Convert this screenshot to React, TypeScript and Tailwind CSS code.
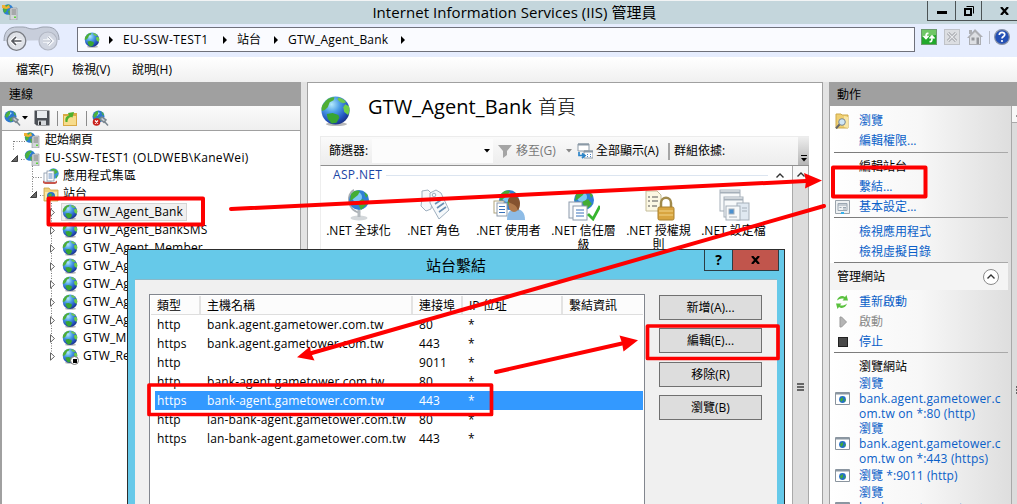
import React from "react";

type P = { className?: string };

function Globe({ className = "w-4 h-4" }: P) {
  return (
    <svg viewBox="0 0 32 32" className={"shrink-0 " + className}>
      <defs>
        <radialGradient id="sea" cx="36%" cy="28%" r="75%">
          <stop offset="0" stopColor="#b4eafc" />
          <stop offset="0.4" stopColor="#4a9ce6" />
          <stop offset="0.8" stopColor="#2250bb" />
          <stop offset="1" stopColor="#1b3487" />
        </radialGradient>
      </defs>
      <ellipse cx="17" cy="29.5" rx="11" ry="2" fill="#b9b9b9" />
      <circle cx="16" cy="15.5" r="14.5" fill="url(#sea)" />
      <path d="M4 8C7 3 12 1 15 2l-1 3-4 2-2 5-3 3-3 1C1 13 2 10 4 8z" fill="#4fae35" />
      <path d="M19 2c4 1 6 2 8 5l-3 1-3-1-3-3z" fill="#6cc850" />
      <path d="M26 9l4 2c1 4 0 7-1 9l-4-3-1-5z" fill="#6fce48" />
      <path d="M7 19l6-1 6 2 1 3-3 5-5 1-4-5z" fill="#38a532" />
    </svg>
  );
}

function Server({ home = false }: { home?: boolean }) {
  return (
    <svg viewBox="0 0 16 16" className="w-4 h-4 shrink-0">
      <circle cx="6" cy="5.5" r="5.2" fill="#2d7fd3" />
      <path d="M3 3c1-1 3-1 4 0L5 5z" fill="#a5e0fa" />
      <path d="M1 5c1-3 4-5 7-4L6 4 4 8 2 9zM6 7l3-1 1 4-3 1z" fill="#4bb13c" />
      {home && <path d="M0 1h3l1 2 3-2 1 3-4 1-4-1z" fill="#f2b134" />}
      <path d="M9 4h6v12H8V5z" fill="#d3d6d9" stroke="#8b8f94" strokeWidth=".6" />
      <path d="M9.500 6h4.500M9.500 8h4.500M9.500 10h4.500" stroke="#666" strokeWidth=".8" />
      <rect x="12" y="12.500" width="2" height="1.500" fill="#5fd23c" />
    </svg>
  );
}

function Pools() {
  return (
    <svg viewBox="0 0 16 16" className="w-4 h-4 shrink-0">
      <circle cx="10.500" cy="5.500" r="5.200" fill="#3b93da" />
      <path d="M8 1l4 0 3 3-3 2-3-1zM13 8l2-1-2 4z" fill="#4db53c" />
      <rect x="1" y="5" width="7" height="9" fill="#fff" stroke="#8595a8" strokeWidth=".8" />
      <rect x="4" y="3" width="7" height="10" fill="#fff" stroke="#8595a8" strokeWidth=".8" />
      <path d="M5.500 6h4M5.500 8h4M5.500 10h4" stroke="#4a78b5" strokeWidth=".9" />
      <path d="M0 12.500l2 1.500h10l2-1.500v2.500l-2 1H2l-2-1z" fill="#c8564d" />
    </svg>
  );
}

function SiteFolder() {
  return (
    <svg viewBox="0 0 16 16" className="w-4 h-4 shrink-0">
      <path d="M1 2h5l1.500 2H15v11H1z" fill="#f0d27a" stroke="#c9a345" strokeWidth=".8" />
      <path d="M2 6h12v8H2z" fill="#fae9a8" />
      <circle cx="8" cy="10" r="4" fill="#2672c9" />
      <path d="M5 9l3-2 1 2-2 3zM9 11l2-2v3z" fill="#4db53c" />
    </svg>
  );
}

function Plug({ off = false }: { off?: boolean }) {
  return (
    <svg viewBox="0 0 17 16" className="w-[17px] h-4 shrink-0">
      <circle cx="6.500" cy="6.500" r="6" fill="#2d78cf" />
      <path d="M3 4c1-2 3-2 5-1L5 6z" fill="#a5e0fa" />
      <path d="M1 6c1-3 3-5 5-5L6 4 3 8zM5 9l3-2 2 2-3 3zM9 1l3 3-1 2z" fill="#4bb13c" />
      <path d="M8 9l2-2 4 3-2 2.500zM12 11l4 4.500" stroke="#7b8790" strokeWidth="1.500" fill="#c5ced6" />
      {off && (
        <g>
          <circle cx="4.500" cy="12" r="3.800" fill="#c9211b" />
          <path d="M3 10.500l3 3M6 10.500l-3 3" stroke="#fff" strokeWidth="1.200" />
        </g>
      )}
    </svg>
  );
}

function Caret({ className = "" }: P) {
  return (
    <svg viewBox="0 0 6 4" className={"w-[6px] h-[4px] shrink-0 " + className}>
      <path d="M0 0h6L3 3.500z" fill="currentColor" />
    </svg>
  );
}

function Crumb() {
  return (
    <svg viewBox="0 0 4 8" className="w-1 h-2 shrink-0">
      <path d="M0 0l4 4-4 4z" fill="#000" />
    </svg>
  );
}

function TitleBar() {
  return (
    <header className="flex h-6 border-t border-[#f2f4f5] bg-[#c4d6dc] shrink-0">
      <div className="w-[68px] pl-[2px] pt-[3px]"><Server home /></div>
      <h1 className="grow text-center text-[15px] leading-[23px] tracking-[0.05px] pl-[34px]">
        Internet Information Services (IIS) 管理員
      </h1>
      <div className="flex w-[90px] h-5 border-l border-b border-[#4c5355] shrink-0">
        <div className="w-7 border-r border-[#4c5355] flex items-end justify-center pb-[6px]">
          <div className="w-[10px] h-[3px] bg-black" />
        </div>
        <div className="w-[26px] border-r border-[#4c5355] flex items-center justify-center">
          <svg viewBox="0 0 10 10" className="w-[10px] h-[10px]">
            <path d="M2.500 .5h7v7" fill="none" stroke="#000" />
            <path d="M1 3h6v6H1z" fill="none" stroke="#000" strokeWidth="2" />
          </svg>
        </div>
        <div className="grow flex items-center pl-[18px]">
          <svg viewBox="0 0 9 8" className="w-[9px] h-2"><path d="M1 0l7 8M8 0L1 8" stroke="#000" strokeWidth="2.200" /></svg>
        </div>
      </div>
    </header>
  );
}

function NavBar() {
  return (
    <div className="flex h-[33px] bg-[#e6edfe] shrink-0">
      <svg viewBox="0 0 60 30" className="w-[60px] h-[30px] ml-[2px] mr-[15px] shrink-0">
        <path d="M2 17C2 6 8 3 15 3h6c4 0 5 2 10 2s7-2 10-2h4c8 0 12 5 12 13" fill="#c8cedb" />
        <path d="M2 17C2 6 8 3 15 3h6c4 0 5 2 10 2s7-2 10-2h4c8 0 12 5 12 13" fill="none" stroke="#9ba2af" />
        <circle cx="14.500" cy="17" r="9.300" fill="#dfe2e8" stroke="#7a7d84" strokeWidth="1.300" />
        <path d="M19.500 17H10.500M14 13L10 17l4 4" fill="none" stroke="#fff" strokeWidth="3.600" />
        <path d="M19.500 17H10.500M14 13L10 17l4 4" fill="none" stroke="#55585e" strokeWidth="1.700" />
        <circle cx="46" cy="17" r="9" fill="#d0d5e0" stroke="#b2b7c3" strokeWidth="1.200" />
        <path d="M41 17h9M46 13l4 4-4 4" fill="none" stroke="#f4f6fa" strokeWidth="3.500" />
        <path d="M41 17h9M46 13l4 4-4 4" fill="none" stroke="#b0b6c2" strokeWidth="1" />
      </svg>
      <div className="flex items-center mt-[3px] w-[838px] h-[25px] border border-[#6f717b] bg-[#fafbff] pl-[6px] text-[12px] shrink-0">
        <Globe className="w-4 h-4 mr-[9px]" />
        <Crumb />
        <span className="w-[100px] pl-[10px] tracking-[0.4px] shrink-0">EU-SSW-TEST1</span>
        <span className="w-[14px] flex justify-end mr-[10px] shrink-0"><Crumb /></span>
        <span className="w-[37px] shrink-0">站台</span>
        <Crumb />
        <span className="w-[123px] pl-[10px] whitespace-nowrap tracking-[0.2px] shrink-0">GTW_Agent_Bank</span>
        <Crumb />
      </div>
      <div className="flex pl-[6px] pt-[5px]">
        <svg viewBox="0 0 16 16" className="w-4 h-4 mr-[7px]">
          <rect x=".5" y=".5" width="15" height="15" fill="#22a92b" stroke="#6c9a6e" />
          <path d="M1 1h14v5L1 8z" fill="#6fc766" />
          <path d="M7.500 4.500C5.500 4 5 5 5 8M2.500 7L5 9.500 7.500 7M8.500 12.500C10.500 13 11 12 11 9M8.500 9.500L11 7l2.500 2.500" fill="none" stroke="#fff" strokeWidth="1.700" />
        </svg>
        <svg viewBox="0 0 16 16" className="w-4 h-4 mr-[7px]">
          <rect x=".5" y=".5" width="15" height="15" fill="#dcdee2" stroke="#bfc2c8" />
          <path d="M4 4l8 8M12 4l-8 8" stroke="#9a9da3" strokeWidth="3" />
          <path d="M4 4l8 8M12 4l-8 8" stroke="#e8e9ec" strokeWidth="1.300" />
        </svg>
        <svg viewBox="0 0 16 16" className="w-4 h-4 mr-[6px]">
          <path d="M2 1h3v4H2zM8 0l8 8h-2v8H2V9H0z" fill="#adafb4" />
          <path d="M8 3l5 5v7H3V8z" fill="#dddfe3" />
          <path d="M4.500 8.500h3v3h-3zM9.500 8.500h2.500V15H9.500z" fill="#95979c" />
        </svg>
        <div className="w-px h-[13px] mt-[2px] bg-[#b9bdc8] mr-[4px]" />
        <svg viewBox="0 0 16 16" className="w-4 h-4">
          <circle cx="8" cy="8" r="7.400" fill="#2450b5" stroke="#8a93a8" strokeWidth="1.200" />
          <path d="M5.300 6c0-3.600 5.600-3.400 5.400-.2C10.600 7.600 8 7.500 8 9.600" fill="none" stroke="#fff" strokeWidth="1.700" />
          <circle cx="8" cy="12" r="1.100" fill="#fff" />
        </svg>
      </div>
    </div>
  );
}

const sites = [
  "GTW_Agent_Bank", "GTW_Agent_BankSMS", "GTW_Agent_Member", "GTW_Ag", "GTW_Ag",
  "GTW_Ag", "GTW_Ag", "GTW_M", "GTW_Re",
];

function Expanded() {
  return <svg viewBox="0 0 7 7" className="w-[7px] h-[7px] shrink-0"><path d="M6.500 .5v6h-6z" fill="#666" stroke="#222" strokeWidth=".8" /></svg>;
}

function Connections() {
  return (
    <section className="w-[301px] flex flex-col border-l-2 border-r border-[#a0a0a0] bg-white shrink-0">
      <h2 className="h-6 bg-[#a0a0a0] text-[12px] leading-[25px] pl-[7px] shrink-0">連線</h2>
      <div className="h-[25px] flex items-center border-b border-[#a0a0a0] bg-gradient-to-b from-[#fbfbfb] to-[#efefef] pl-[2px] shrink-0">
        <Plug />
        <Caret className="ml-[1px] mr-[6px]" />
        <svg viewBox="0 0 16 16" className="w-4 h-4 mr-[7px]">
          <path d="M.5 .5h15v15h-13l-2-2z" fill="#4b4f55" />
          <path d="M3 1h10v7H3z" fill="#e9ecef" />
          <path d="M4 10.500h8V15H4z" fill="#d5d8db" />
          <path d="M5 11.500h2V15H5z" fill="#333" />
        </svg>
        <div className="w-px h-[15px] bg-[#8b8b8b] mr-[5px]" />
        <svg viewBox="0 0 15 15" className="w-[15px] h-[15px] mr-[8px]">
          <path d="M0 3h7l1-1h6v13H0z" fill="#d9a944" />
          <path d="M1 5h12v9H1z" fill="#f7dc8c" />
          <path d="M2.500 11C2 7 3 5 6 4.500L5 2l6-1-1.500 5.500L8 6C5 7 4.500 8.500 4.500 11z" fill="#4fb12e" />
        </svg>
        <div className="w-px h-[15px] bg-[#8b8b8b] mr-[5px]" />
        <Plug off />
      </div>
      <div className="relative grow text-[12px] whitespace-nowrap overflow-hidden">
        <svg className="absolute left-0 top-0 w-16 h-[240px]" viewBox="0 0 64 240">
          <path d="M11.500 10v9M12 10.500h11M19 28.500h4M30.500 35v26M31 46.500h10M38 64.500h4M49.500 72v156" stroke="#777" strokeDasharray="1 1.500" fill="none" />
        </svg>
        <div className="relative h-[18px] flex items-center pl-[22px] gap-[5px]"><Server home />起始網頁</div>
        <div className="relative h-[18px] flex items-center pl-[9px]">
          <Expanded /><div className="w-[6px]" /><Server />
          <span className="ml-[5px] tracking-[0.33px]">EU-SSW-TEST1 (OLDWEB\KaneWei)</span>
        </div>
        <div className="relative h-[18px] flex items-center pl-[41px] gap-[4px] tracking-[0.2px]"><Pools />應用程式集區</div>
        <div className="relative h-[18px] flex items-center pl-[28px]">
          <Expanded /><div className="w-[6px]" /><SiteFolder /><span className="ml-[4px]">站台</span>
        </div>
        {sites.map((s, i) => (
          <div key={i} className="relative h-[18px] flex items-center pl-[48px]">
            <svg viewBox="0 0 5 9" className="w-[5px] h-[9px] shrink-0 mr-[6px]"><path d="M.5 .8L4.500 4.500.5 8.200z" fill="#fff" stroke="#555" strokeWidth=".9" /></svg>
            <div className={i === 0 ? "h-[18px] w-[126px] flex items-center border border-[#d5d5d5] bg-[#f0f0f0]" : "h-[18px] flex items-center border border-transparent"}>
              <span className="relative w-[16px] h-[16px] flex">
                <Globe className="w-4 h-4" />
                {i === 8 && (
                  <span className="absolute -right-px -bottom-px w-[9px] h-[9px] rounded-full bg-white border border-[#777] flex items-center justify-center">
                    <span className="w-[4px] h-[4px] bg-black" />
                  </span>
                )}
              </span>
              <span className="ml-[5px] tracking-[0.18px]">{s}</span>
            </div>
          </div>
        ))}
      </div>
    </section>
  );
}

function FeatureIcon({ kind }: { kind: number }) {
  const land = (
    <g>
      <circle cx="16" cy="11" r="10" fill="#2f7fd6" />
      <circle cx="14" cy="8" r="5" fill="#7cc8f3" />
      <path d="M8 5c3-4 7-4 9-3l-2 4-5 4-3 2zM14 13l6-3 4 5-6 6zM21 3l4 3-2 3z" fill="#43ad35" />
    </g>
  );
  return (
    <svg viewBox="0 0 32 32" className="w-8 h-8">
      {kind === 0 && (
        <g>
          <path d="M11 1C3 5 4 21 17 24" fill="none" stroke="#a9aeb3" strokeWidth="2" />
          <ellipse cx="16" cy="29" rx="8.500" ry="2.500" fill="#d3d7da" />
          <path d="M14.500 21h3v7h-3z" fill="#b4babf" />
          {land}
        </g>
      )}
      {kind === 1 && (
        <g stroke="#9fb0c0" fill="#f6f9fb" strokeWidth="1">
          <path d="M4 2l6-1 5 5-2 14-5 2-5-5 1-8z" />
          <path d="M12 4l6-3 5 3 8 17-10 9-9-16z" />
          <circle cx="16" cy="6" r="1.800" />
          <path d="M17 15l6-4M19 19l7-5M21 23l7-5" stroke="#6b90b4" strokeWidth="1.600" />
        </g>
      )}
      {kind === 2 && (
        <g>
          {land}
          <rect x="1" y="12" width="10" height="12" fill="#fff" stroke="#b0a37c" />
          <rect x="4" y="14" width="10" height="13" fill="#fff" stroke="#8c9aab" />
          <path d="M6 17.500h6M6 20.500h6M6 23.500h6" stroke="#3b72ba" />
          <path d="M14 31c0-8 3-11 9-11s9 4 9 11z" fill="#8ebce6" />
          <ellipse cx="21" cy="16" rx="5.500" ry="7" fill="#b07a4c" />
          <path d="M15 13c-1-8 12-8 12 1 0 3-1 6-2 8-1-6-5-7-10-9z" fill="#85532f" />
        </g>
      )}
      {kind === 3 && (
        <g>
          {land}
          <rect x="1" y="13" width="13" height="16" fill="#f7f9fb" stroke="#8c9aab" />
          <rect x="5" y="17" width="14" height="14" fill="#fff" stroke="#8c9aab" />
          <path d="M8 21h8M8 24h8M8 27h8" stroke="#3b72ba" />
          <path d="M20 25l5 5 7-13" fill="none" stroke="#37b52f" strokeWidth="2.800" />
        </g>
      )}
      {kind === 4 && (
        <g>
          <path d="M3 2h11l4 4v16H3z" fill="#fbf7e3" stroke="#c5bd9a" />
          <path d="M5 8h2M5 12h2M5 17h2M9 8h6M9 12h6M9 17h5" stroke="#555" strokeWidth="1.200" />
          <path d="M18 19v-5c0-7 10-7 10 0v5" fill="none" stroke="#a08a4c" strokeWidth="2.500" />
          <rect x="15" y="18" width="16" height="13" rx="1.500" fill="#d8a540" stroke="#a9802f" />
          <path d="M16 22h14M16 26h14" stroke="#f3d588" />
        </g>
      )}
      {kind === 5 && (
        <g fill="#f7f9fa" stroke="#a5afb9">
          <rect x="2" y="1" width="20" height="21" />
          <path d="M2 3.500h20" strokeWidth="2" />
          <rect x="6" y="8" width="19" height="20" />
          <path d="M6 10.500h19" strokeWidth="2" />
          <rect x="19" y="14" width="12" height="17" fill="#dfe8f1" />
          <rect x="8" y="17" width="14" height="14" />
          <rect x="11" y="20" width="5" height="5" fill="#4a90d0" />
          <path d="M11 28h8M24 19h5M24 22h5" />
        </g>
      )}
    </svg>
  );
}

const features = [".NET 全球化", ".NET 角色", ".NET 使用者", ".NET 信任層級", ".NET 授權規則", ".NET 設定檔"];

function ChevronUp() {
  return <svg viewBox="0 0 8 5" className="w-2 h-[5px] shrink-0"><path d="M.5 4.500L4 1l3.500 3.500" fill="none" stroke="#333" strokeWidth="1.400" /></svg>;
}

function Home() {
  return (
    <main className="w-[516px] flex flex-col border-l border-r border-t border-[#a0a0a0] bg-white ml-[6px] pl-[12px] shrink-0">
      <div className="h-[53px] flex items-center shrink-0">
        <Globe className="w-[31px] h-[32px] mt-[2px]" />
        <h2 className="ml-[17px] text-[20px] whitespace-nowrap tracking-[0.1px] mt-[-6px]">GTW_Agent_Bank<span className="ml-[6px] text-[19px] font-light">首頁</span></h2>
      </div>
      <div className="w-[489px] h-[30px] flex items-center border-t border-l border-[#ececec] border-b border-b-[#909090] bg-gradient-to-b from-[#fafafa] to-[#ededed] text-[12px] pl-[8px] shrink-0">
        <span className="w-[43px] whitespace-nowrap">篩選器:</span>
        <div className="w-[121px] h-6 bg-[#fcfcfc] flex items-center justify-end pr-[3px]"><Caret /></div>
        <svg viewBox="0 0 14 14" className="w-[14px] h-[14px] ml-[5px] mr-[4px]"><path d="M0 1h14L9 7v4l-4 3V7z" fill="#a5a5a5" /></svg>
        <span className="w-[50px] text-[#777] whitespace-nowrap">移至(G)</span>
        <Caret className="text-[#888] mr-[5px]" />
        <svg viewBox="0 0 16 16" className="w-4 h-4 mr-[3px] shrink-0">
          <path d="M1 1h11v7H1zM7 8h9v7H7z" fill="#fff" stroke="#8b99a6" />
          <path d="M1 1.500h11M7 8.500h9" stroke="#8b99a6" strokeWidth="2" />
          <path d="M2 9v3.500h5M5 10.500L8 12.500l-3 2.500" stroke="#2d85c9" strokeWidth="1.700" fill="none" />
          <path d="M10 11.500h1M13 11.500h1M10 13.500h1M13 13.500h1" stroke="#4d7fc0" />
        </svg>
        <span className="w-[72px] whitespace-nowrap shrink-0">全部顯示(A)</span>
        <div className="w-[2px] h-[17px] bg-[#a5a5a5] mr-[4px]" />
        <span className="whitespace-nowrap">群組依據:</span>
        <div className="ml-auto w-[11px] h-full bg-gradient-to-b from-[#eeeeee] to-[#b5b5b5] flex flex-col items-center justify-end pb-[3px] gap-[2px]">
          <div className="w-[6px] h-px bg-black" /><Caret />
        </div>
      </div>
      <div className="w-[489px] flex grow border-l border-[#eeeeee]">
        <div className="w-[471px] shrink-0">
          <div className="h-[18px] flex items-center pl-[12px] text-[12px] text-[#1a45a5] shrink-0">
            <span className="w-[53px] tracking-[0.35px]">ASP.NET</span>
            <div className="w-[382px] h-px bg-[#dce5f0]" />
            <div className="ml-[8px]"><ChevronUp /></div>
          </div>
          <div className="flex pt-[5px]">
            {features.map((f, i) => (
              <div key={f} className="w-[75px] flex flex-col items-center text-center text-[12px] leading-[14px]">
                <FeatureIcon kind={i} />
                <span className="mt-[3px] w-[72px]">{f}</span>
              </div>
            ))}
          </div>
        </div>
        <div className="w-[17px] border-l border-r border-[#a9a9a9] bg-[#dcdcdc] flex flex-col items-center shrink-0">
          <div className="h-[17px] w-full flex items-center justify-center bg-[#f7f7f7]"><ChevronUp /></div>
          <div className="mt-[200px] flex flex-col gap-px">
            <div className="w-[7px] h-[2px] bg-[#666]" /><div className="w-[7px] h-[2px] bg-[#666]" /><div className="w-[7px] h-[2px] bg-[#666]" />
          </div>
        </div>
      </div>
    </main>
  );
}

function Rule() {
  return <div className="h-px ml-[4px] w-[174px] bg-gradient-to-r from-[#777] to-[#aaa] shrink-0" />;
}

function Action({ icon, children, className = "h-5 text-[#0a5fc8]" }: { icon?: React.ReactNode; children: React.ReactNode; className?: string }) {
  return (
    <div className={"flex items-center shrink-0 " + className}>
      <span className="w-[29px] pl-[5px] flex shrink-0">{icon}</span>
      <span className="whitespace-nowrap">{children}</span>
    </div>
  );
}

function BrowserIcon() {
  return (
    <svg viewBox="0 0 15 13" className="w-[15px] h-[13px]">
      <path d="M.5 .5h14v12H.5z" fill="#fff" stroke="#8a949e" />
      <path d="M1 1.500h13" stroke="#8b97a2" strokeWidth="2" />
      <circle cx="7.500" cy="7.500" r="3.400" fill="#236fc6" />
      <path d="M5 7l3-2v3l-2 2zM9 8l2-1-1 3z" fill="#41ab38" />
    </svg>
  );
}

function Actions() {
  return (
    <aside className="flex flex-col ml-[6px] grow min-w-0 overflow-hidden border-l border-[#a0a0a0]">
      <h2 className="h-6 bg-[#a0a0a0] text-[12px] leading-[25px] pl-[7px] shrink-0">動作</h2>
      <div className="flex grow">
        <div className="w-[181px] flex flex-col bg-gradient-to-r from-white via-[#f7f7f7] to-[#dedede] text-[12px] pt-[5px] shrink-0">
          <Action icon={
            <svg viewBox="0 0 14 16" className="w-[14px] h-4">
              <path d="M1 1h5l1 1h6v13H1z" fill="#efcf71" stroke="#cda94b" />
              <path d="M9 3l4 1v11l-4-1z" fill="#f9e6a5" />
              <circle cx="7" cy="9" r="3.300" fill="#cfe6f5" stroke="#788694" />
              <path d="M4.500 11.500L1 15.500" stroke="#666" strokeWidth="2" />
            </svg>}>瀏覽</Action>
          <Action>編輯權限...</Action>
          <div className="h-px" /><Rule /><div className="h-1" />
          <Action className="h-5 text-black">編輯站台</Action>
          <Action>繫結...</Action>
          <Action icon={
            <svg viewBox="0 0 15 15" className="w-[15px] h-[15px]">
              <path d="M.5 .5h14v13H.5z" fill="#eef1f3" stroke="#9aa3ab" />
              <path d="M3 3.500h9v7H3zM3 5h9M4.500 7.500h2M8 7.500h3M8 9h3" fill="none" stroke="#9aa6b2" />
              <path d="M6 12h3v2H6z" fill="#35b2ed" />
            </svg>}>基本設定...</Action>
          <Rule /><div className="h-1" />
          <Action>檢視應用程式</Action>
          <Action>檢視虛擬目錄</Action>
          <Rule />
          <div className="h-[27px] flex items-center pl-[7px] bg-[#f4f4f4] mr-[3px] shrink-0">
            <span className="w-[146px]">管理網站</span>
            <span className="w-4 h-4 rounded-full border border-[#8a8a8a] bg-white flex items-center justify-center"><ChevronUp /></span>
          </div>
          <div className="h-[2px]" />
          <Action icon={
            <svg viewBox="0 0 14 14" className="w-[14px] h-[14px]">
              <path d="M2 5.500c1-4 5-5.500 8-3.500l1.500-2L13 5.500H7.500L9 3.700C6.500 3 4.500 3.500 2 5.500zM12 8.500c-1 4-5 5.500-8 3.500l-1.500 2L1 8.500h5.500L5 10.300c2.500.7 4.500.2 7-1.800z" fill="#5ac13e" />
            </svg>}>重新啟動</Action>
          <Action className="h-5 text-[#8a8a8a]" icon={<svg viewBox="0 0 14 12" className="w-[14px] h-3"><path d="M5 1h1.500l5 5-5 5H5z" fill="#b5b5b5" stroke="#999" /></svg>}>啟動</Action>
          <Action icon={<div className="w-[10px] h-[10px] ml-[3px] bg-[#4a4a4a] border border-[#222]" />}>停止</Action>
          <Rule /><div className="h-1" />
          <Action className="h-[19px] text-black">瀏覽網站</Action>
          <Action icon={<BrowserIcon />} className="h-[45px] leading-[15px] tracking-[0.17px] text-[#0a5fc8]">瀏覽<br />bank.agent.gametower.c<br />om.tw on *:80 (http)</Action>
          <Action icon={<BrowserIcon />} className="h-[45px] leading-[15px] tracking-[0.17px] text-[#0a5fc8]">瀏覽<br />bank.agent.gametower.c<br />om.tw on *:443 (https)</Action>
          <Action icon={<BrowserIcon />} className="h-[19px] tracking-[0.05px] text-[#0a5fc8]">瀏覽 *:9011 (http)</Action>
          <Action icon={<span className="mt-[17px]"><BrowserIcon /></span>} className="h-[30px] leading-[15px] tracking-[0.17px] text-[#0a5fc8]">瀏覽<br />bank-agent.gametower.c</Action>
        </div>
        <div className="grow border-l border-[#a9a9a9] bg-[#dcdcdc] overflow-hidden">
          <div className="h-[17px] w-[17px] bg-[#f8f8f8] border-b border-[#a9a9a9] flex items-center pl-[4px]"><ChevronUp /></div>
          <div className="mt-[263px] ml-[4px] flex flex-col gap-px">
            <div className="w-[7px] h-[2px] bg-[#666]" /><div className="w-[7px] h-[2px] bg-[#666]" /><div className="w-[7px] h-[2px] bg-[#666]" />
          </div>
        </div>
      </div>
    </aside>
  );
}

const rows = [
  ["http", "bank.agent.gametower.com.tw", "80"],
  ["https", "bank.agent.gametower.com.tw", "443"],
  ["http", "", "9011"],
  ["http", "bank-agent.gametower.com.tw", "80"],
  ["https", "bank-agent.gametower.com.tw", "443"],
  ["http", "lan-bank-agent.gametower.com.tw", "80"],
  ["https", "lan-bank-agent.gametower.com.tw", "443"],
];

function Dialog() {
  return (
    <div className="absolute left-[127px] top-[249px] w-[658px] h-[270px] border border-[#2d2d2d] bg-[#66c9e9] px-[7px] flex flex-col">
      <div className="flex h-[29px] shrink-0 mr-[-2px]">
        <h2 className="grow text-center text-[15px] leading-[30px] pl-[73px]">站台繫結</h2>
        <div className="flex h-[21px] w-[75px] border border-t-0 border-[#2c3c44] shrink-0">
          <div className="w-[28px] border-r border-[#2c3c44] text-center text-[14px] leading-[19px] font-bold">?</div>
          <div className="grow bg-[#c1554c] flex items-center justify-center">
            <svg viewBox="0 0 9 8" className="w-[9px] h-2"><path d="M1 0l7 8M8 0L1 8" stroke="#000" strokeWidth="2.200" /></svg>
          </div>
        </div>
      </div>
      <div className="flex grow border-t border-[#8ab8c8] bg-[#f0f0f0] pl-[14px] pt-[14px]">
        <div className="w-[496px] border border-[#82868e] bg-white text-[12px] pl-px pt-px shrink-0">
          <div className="flex h-[19px] leading-[20px] border-b border-[#dedede] mr-px bg-[#fcfcfc] whitespace-nowrap">
            <span className="w-[50px] border-r-2 border-[#e3e3e3] pl-[6px]">類型</span>
            <span className="w-[212px] border-r-2 border-[#e3e3e3] pl-[6px]">主機名稱</span>
            <span className="w-[50px] border-r-2 border-[#e3e3e3] pl-[6px]">連接埠</span>
            <span className="w-[100px] border-r-2 border-[#e3e3e3] pl-[6px]">IP 位址</span>
            <span className="pl-[6px]">繫結資訊</span>
          </div>
          {rows.map((r, i) => (
            <div key={i} className={i === 4 ? "flex h-[19px] leading-[19px] ml-[4px] mr-px pl-[2px] bg-[#3399ff] text-white tracking-[0.14px]" : "flex h-[19px] leading-[19px] ml-[4px] pl-[2px] tracking-[0.14px]"}>
              <span className="w-[50px]">{r[0]}</span>
              <span className="w-[212px] whitespace-nowrap">{r[1]}</span>
              <span className="w-[49px]">{r[2]}</span>
              <span>*</span>
            </div>
          ))}
        </div>
        <div className="flex flex-col pl-[14px] text-[12px]">
          {["新增(A)...", "編輯(E)...", "移除(R)", "瀏覽(B)"].map((b, i) => (
            <button key={b} className={i === 1 ? "w-[103px] h-[25px] mt-px border border-[#707070] bg-[#dddddd] mb-[8px] leading-[22px]" : "w-[103px] h-[25px] mt-px border border-[#707070] bg-[#dddddd] mb-[7px] leading-[22px]"}>{b}</button>
          ))}
        </div>
      </div>
    </div>
  );
}

function Marks() {
  return (
    <svg viewBox="0 0 1017 504" className="absolute left-0 top-0 w-[1017px] h-[504px]" fill="none" stroke="#fe0000" strokeLinejoin="round" strokeLinecap="round">
      <rect x="48.500" y="198.500" width="154.500" height="26" strokeWidth="4" />
      <rect x="833" y="167.500" width="92.500" height="29" strokeWidth="4" />
      <rect x="149" y="385" width="342.500" height="29.500" strokeWidth="3.700" />
      <rect x="647.500" y="326" width="130.500" height="32.500" strokeWidth="3.700" />
      <path d="M231 209L806 181" strokeWidth="4" />
      <path d="M824 206L310 353.500" strokeWidth="4" />
      <path d="M496 372L622 343.500" strokeWidth="4" />
      <path d="M804 173L822 180.500 805 188.500 806 181z" fill="#fe0000" stroke="none" />
      <path d="M297 357.300L310 346.500 311 353 314.500 360.500z" fill="#fe0000" stroke="none" />
      <path d="M638 340.300L619.500 335.500 622 343 623.500 351.500z" fill="#fe0000" stroke="none" />
    </svg>
  );
}

export default function App() {
  return (
    <div className="relative w-[1017px] h-[504px] overflow-hidden flex flex-col bg-[#e3e3e3] text-black font-['Open_Sans','Noto_Sans_CJK_TC',sans-serif]">
      <TitleBar />
      <NavBar />
      <nav className="h-[25px] flex items-center bg-gradient-to-b from-white to-[#f0f0f0] text-[12px] pl-[16px] shrink-0">
        <span className="w-[56px]">檔案(F)</span>
        <span className="w-[60px]">檢視(V)</span>
        <span>說明(H)</span>
      </nav>
      <div className="flex h-[422px] shrink-0 overflow-hidden">
        <Connections />
        <Home />
        <Actions />
      </div>
      <Dialog />
      <Marks />
    </div>
  );
}
